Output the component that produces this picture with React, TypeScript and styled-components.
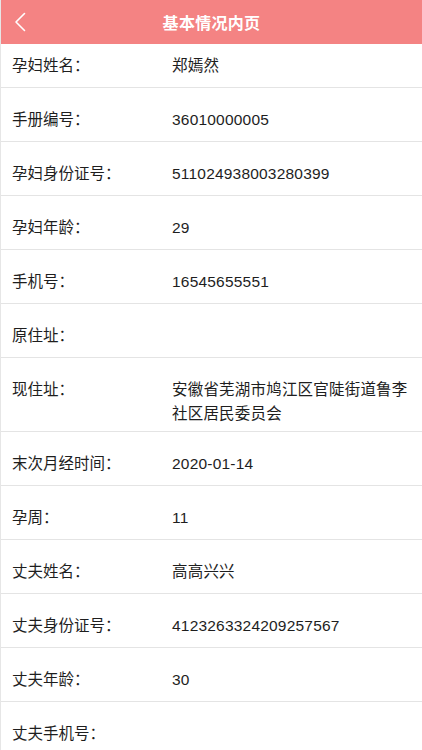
import React from "react"
import styled, { createGlobalStyle } from "styled-components"

const GlobalStyle = createGlobalStyle`
  html, body {
    margin: 0;
    padding: 0;
    background: #fff;
    font-family: "Liberation Sans", "Noto Sans CJK SC", sans-serif;
  }
`

const rows: { label: string; value?: string }[] = [
  { label: "孕妇姓名：", value: "郑嫣然" },
  { label: "手册编号：", value: "36010000005" },
  { label: "孕妇身份证号：", value: "511024938003280399" },
  { label: "孕妇年龄：", value: "29" },
  { label: "手机号：", value: "16545655551" },
  { label: "原住址：" },
  { label: "现住址：", value: "安徽省芜湖市鸠江区官陡街道鲁李社区居民委员会" },
  { label: "末次月经时间：", value: "2020-01-14" },
  { label: "孕周：", value: "11" },
  { label: "丈夫姓名：", value: "高高兴兴" },
  { label: "丈夫身份证号：", value: "4123263324209257567" },
  { label: "丈夫年龄：", value: "30" },
  { label: "丈夫手机号：" },
]

const BackIcon = () => (
  <svg width="14" height="20" viewBox="0 0 14 20">
    <path d="M11.5 1.5 L3 10 L11.5 18.5" fill="none" stroke="#fff" strokeWidth="1.6" strokeLinecap="round" strokeLinejoin="round" />
  </svg>
)

const App = () => {
  return (
    <Page>
      <GlobalStyle />
      <Header>
        <BackButton>
          <BackIcon />
        </BackButton>
        <Title>基本情况内页</Title>
      </Header>
      <List>
        {rows.map(r => (
          <Row key={r.label}>
            <Label>{r.label}</Label>
            <Value>{r.value}</Value>
          </Row>
        ))}
      </List>
    </Page>
  )
}

const Page = styled.div`
  width: 422px;
  height: 750px;
  overflow: hidden;
  background: #fff;
  border-left: 1px solid #e6e6e6;
  box-sizing: border-box;
`

const Header = styled.div`
  height: 44px;
  background: #f48383;
  display: flex;
  align-items: center;
  justify-content: center;
  position: relative;
`

const BackButton = styled.div`
  position: absolute;
  left: 12px;
  top: 12px;
  display: flex;
`

const Title = styled.div`
  color: #fff;
  font-size: 16px;
  font-weight: bold;
  letter-spacing: 0.3px;
`

const List = styled.div`
  display: flex;
  flex-direction: column;
  margin-top: -10px;
`

const Row = styled.div`
  display: flex;
  min-height: 54px;
  box-sizing: border-box;
  padding: 20px 0 5px;
  border-bottom: 1px solid #e4e4e4;
  font-size: 15.5px;
  line-height: 24px;
  color: #1e1e1e;
`

const Label = styled.div`
  width: 160px;
  padding-left: 11px;
  flex-shrink: 0;
`

const Value = styled.div`
  width: 236px;
  letter-spacing: 0.2px;
`

export default App
